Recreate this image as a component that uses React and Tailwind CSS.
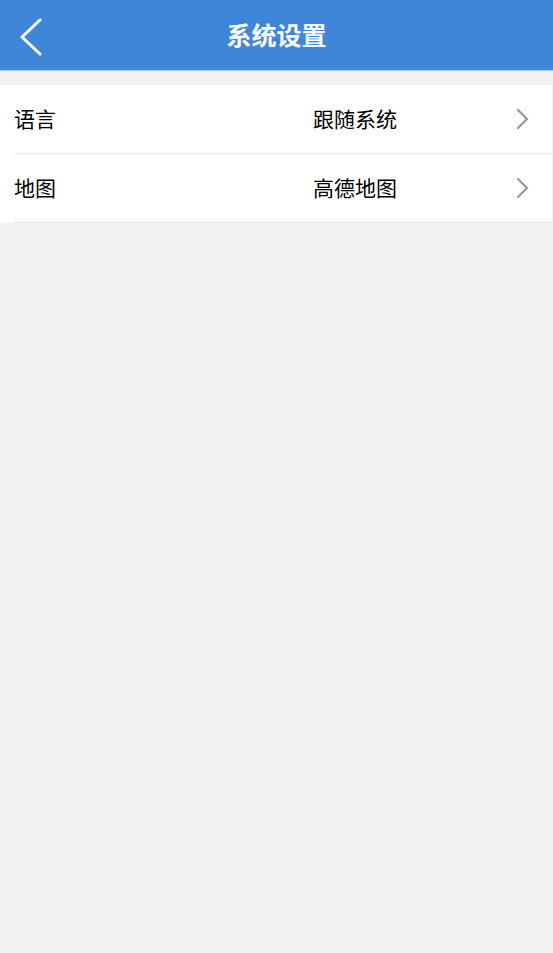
const rows = [
  { label: '语言', value: '跟随系统' },
  { label: '地图', value: '高德地图' },
];

function Row({ label, value }) {
  return (
    <div className="bg-white">
      <div className="flex items-center h-[68px] pl-[14px] pr-[22px] text-[21px] text-black">
        <span className="w-[299px]">{label}</span>
        <span className="flex-1">{value}</span>
        <svg width="14" height="22" viewBox="0 0 14 22" fill="none">
          <path d="M2 2 L11 11 L2 20" stroke="#9c9ca0" strokeWidth="2.4" strokeLinecap="round" strokeLinejoin="round" />
        </svg>
      </div>
      <div className="ml-[14px] h-px bg-[#e8e8e8]" />
    </div>
  );
}

export default function App() {
  return (
    <div
      className="w-[553px] h-[953px] bg-[#f2f2f2] flex flex-col"
      style={{ fontFamily: '"Noto Sans CJK SC", "Noto Sans", sans-serif' }}
    >
      <div className="relative h-[71px] bg-[#3d86d8] border-b border-[#a9c8ee] flex items-center justify-center shrink-0">
        <svg className="absolute left-[18px] top-[18px]" width="28" height="38" viewBox="0 0 28 38" fill="none">
          <path d="M22 2 L4 19 L22 36" stroke="white" strokeWidth="3" strokeLinecap="round" strokeLinejoin="round" />
        </svg>
        <span className="text-white text-[25px] font-bold">系统设置</span>
      </div>
      <div className="mt-[14px] mr-px">
        {rows.map((r) => (
          <Row key={r.label} {...r} />
        ))}
      </div>
    </div>
  );
}
